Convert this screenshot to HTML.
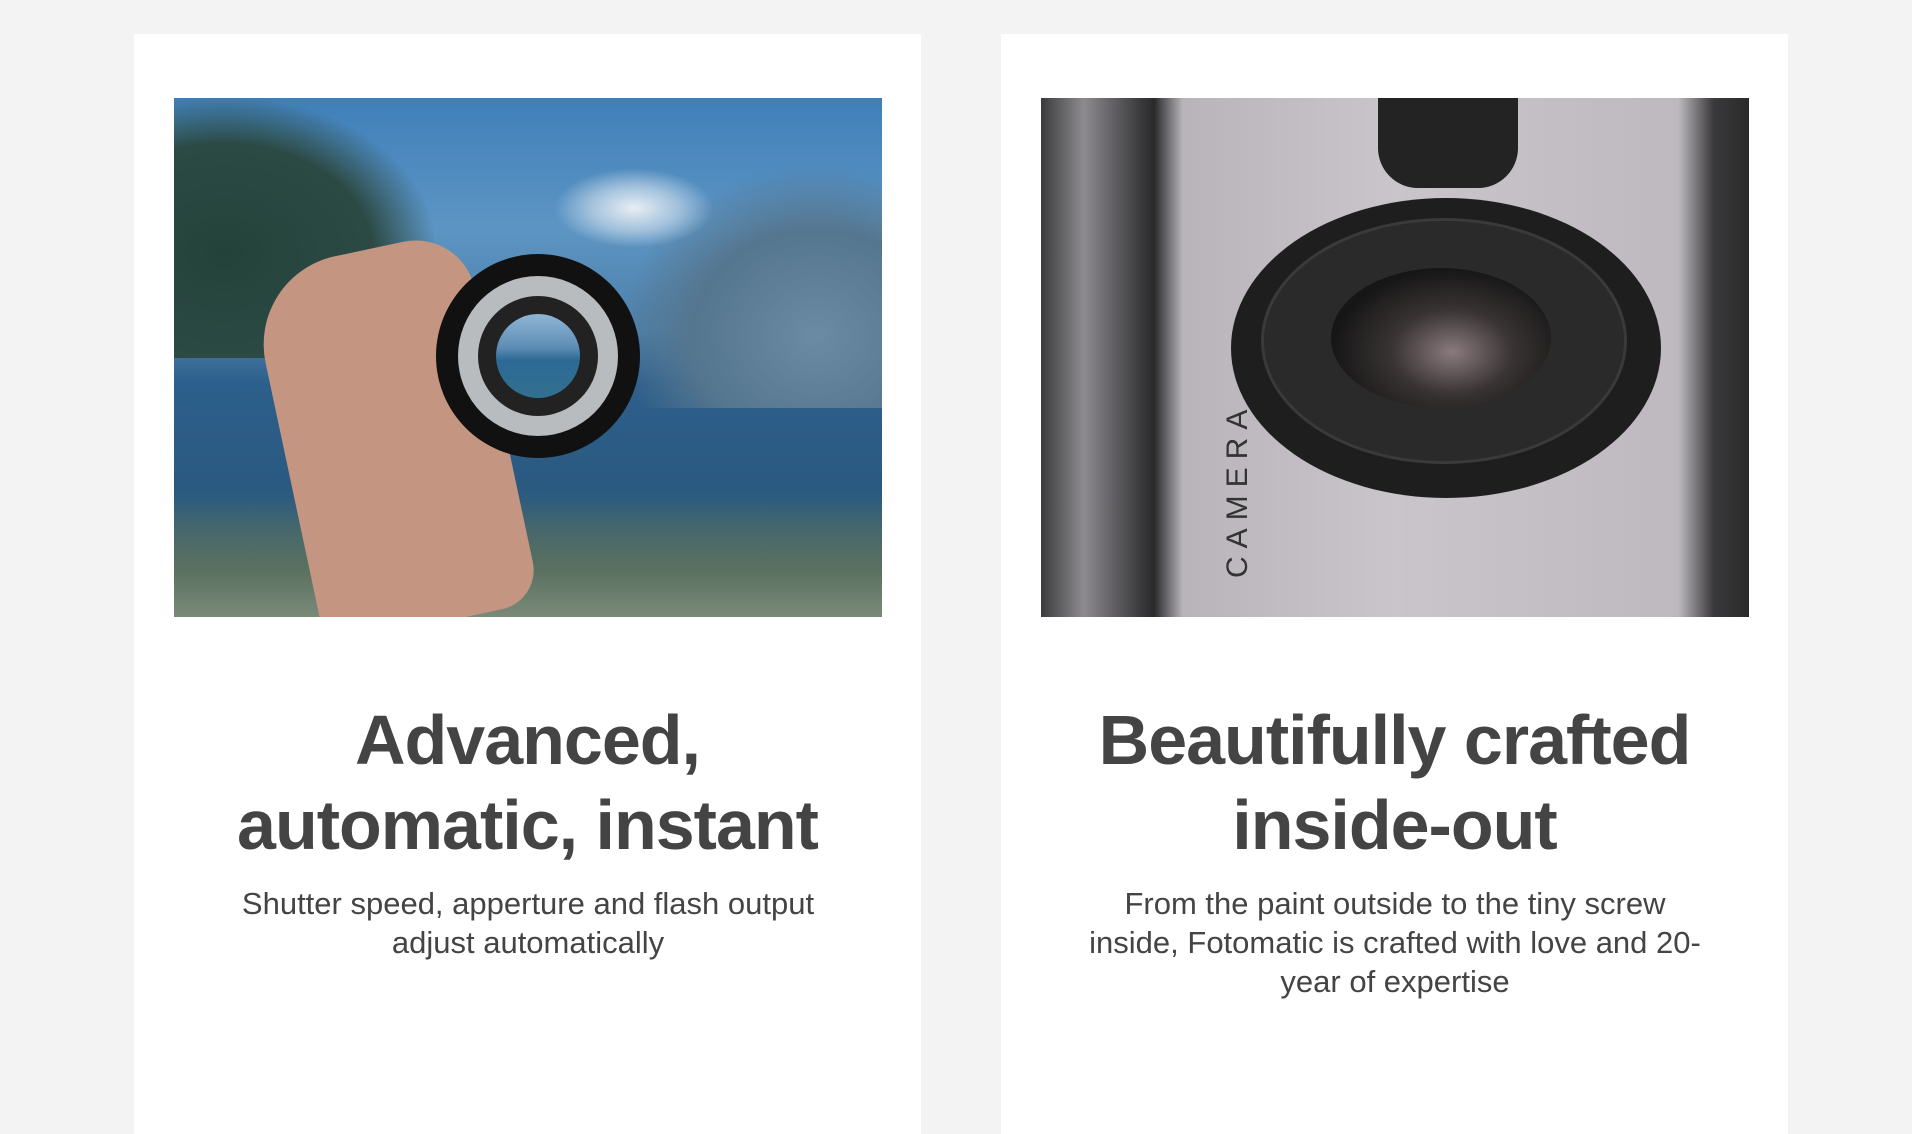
<!DOCTYPE html>
<html><head><meta charset="utf-8">
<style>
html,body{margin:0;padding:0;width:1912px;height:1124px;background:#f3f3f3;overflow:hidden;font-family:"Liberation Sans",sans-serif;}
.card{position:absolute;top:34px;width:787px;height:1100px;background:#fff;}
.img{position:absolute;top:64px;left:40px;width:708px;height:519px;overflow:hidden;}
.t{position:absolute;top:664px;left:0;width:100%;text-align:center;color:#444;font-weight:bold;font-size:70px;line-height:85px;letter-spacing:-1px;}
.s{position:absolute;left:30px;width:728px;text-align:center;color:#444;font-size:31px;line-height:39px;}
</style></head><body>
<div class="card" style="left:134px">
  <div class="img" style="background:linear-gradient(180deg,#3f7fb8 0%,#5d95c4 25%,#4d7fa8 45%,#2d5f8c 55%,#2a5a80 75%,#4d6a62 100%)">
    <div style="position:absolute;left:-40px;top:0;width:300px;height:260px;background:radial-gradient(ellipse at 30% 60%,#23433a 0%,#2c4a44 50%,transparent 72%)"></div>
    <div style="position:absolute;left:450px;top:70px;width:320px;height:240px;background:radial-gradient(ellipse at 60% 70%,#6b8aa4 0%,#55768f 45%,transparent 72%)"></div>
    <div style="position:absolute;left:380px;top:70px;width:160px;height:80px;background:radial-gradient(ellipse,#e8eef3 0%,rgba(230,238,245,.5) 40%,transparent 70%)"></div>
    <div style="position:absolute;left:0;top:400px;width:708px;height:119px;background:linear-gradient(180deg,transparent,#5a7060 60%,#7a8a78)"></div>
    <div style="position:absolute;left:110px;top:150px;width:220px;height:380px;background:#c49580;border-radius:90px 60px 40px 30px;transform:rotate(-12deg)"></div>
    <div style="position:absolute;left:262px;top:156px;width:204px;height:204px;border-radius:50%;background:#111"></div>
    <div style="position:absolute;left:284px;top:178px;width:160px;height:160px;border-radius:50%;background:#b8bcbf"></div>
    <div style="position:absolute;left:304px;top:198px;width:120px;height:120px;border-radius:50%;background:#222"></div>
    <div style="position:absolute;left:322px;top:216px;width:84px;height:84px;border-radius:50%;background:linear-gradient(180deg,#8fb5d5 0%,#5d8db5 40%,#2c6a95 55%,#336f8f 100%)"></div>
  </div>
  <div class="t">Advanced,<br>automatic, instant</div>
  <div class="s" style="top:850px">Shutter speed, apperture and flash output<br>adjust automatically</div>
</div>
<div class="card" style="left:1001px">
  <div class="img" style="background:linear-gradient(90deg,#3a3a3c 0%,#8e8b90 6%,#3b3a3c 14%,#2a2a2b 16%,#b8b4ba 20%,#c9c5cb 50%,#bdb9bf 90%,#3a393b 95%,#2a2a2a 100%)">
    <div style="position:absolute;left:337px;top:0;width:140px;height:90px;background:#232323;border-radius:0 0 40px 40px"></div>
    <div style="position:absolute;left:190px;top:100px;width:430px;height:300px;border-radius:50%;background:#1e1e1f"></div>
    <div style="position:absolute;left:220px;top:120px;width:360px;height:240px;border-radius:50%;background:#2a2a2b;border:3px solid #3a3a3b"></div>
    <div style="position:absolute;left:290px;top:170px;width:220px;height:140px;border-radius:50%;background:radial-gradient(ellipse at 55% 60%,#8a7a7e 0%,#3a3434 35%,#161616 70%)"></div>
    <div style="position:absolute;left:180px;top:480px;transform:rotate(-90deg);transform-origin:left top;color:#333;font-size:30px;letter-spacing:8px">CAMERA</div>
  </div>
  <div class="t">Beautifully crafted<br>inside-out</div>
  <div class="s" style="top:850px">From the paint outside to the tiny screw<br>inside, Fotomatic is crafted with love and 20-<br>year of expertise</div>
</div>
</body></html>
